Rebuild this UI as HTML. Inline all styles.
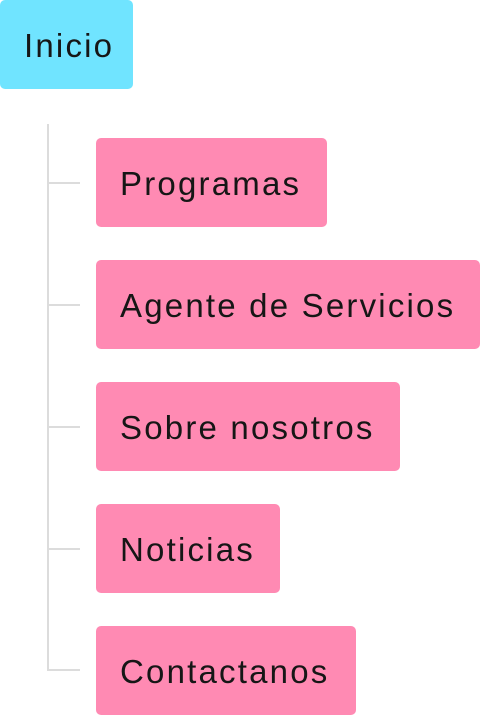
<!DOCTYPE html>
<html><head><style>
body{margin:0;width:480px;height:716px;background:#fff;position:relative;overflow:hidden;font-family:"Liberation Sans",sans-serif;}
.b{position:absolute;height:89px;border-radius:5px;color:#161616;font-size:33px;letter-spacing:2.2px;line-height:91px;padding-left:24px;box-sizing:border-box;}
.p{background:#ff8ab3;left:96px;}
.v{position:absolute;left:47px;top:124px;width:2px;height:547px;background:#dcdcdc;}
.h{position:absolute;left:47px;width:33px;height:2px;background:#dcdcdc;}
</style></head><body>
<div class="b" style="left:0;top:0;width:133px;background:#70e4ff;">Inicio</div>
<div class="v"></div>
<div class="h" style="top:182px"></div>
<div class="h" style="top:304px"></div>
<div class="h" style="top:426px"></div>
<div class="h" style="top:548px"></div>
<div class="h" style="top:669px"></div>
<div class="b p" style="top:138px;width:231px">Programas</div>
<div class="b p" style="top:260px;width:384px">Agente de Servicios</div>
<div class="b p" style="top:382px;width:304px">Sobre nosotros</div>
<div class="b p" style="top:504px;width:184px">Noticias</div>
<div class="b p" style="top:626px;width:260px">Contactanos</div>
</body></html>
